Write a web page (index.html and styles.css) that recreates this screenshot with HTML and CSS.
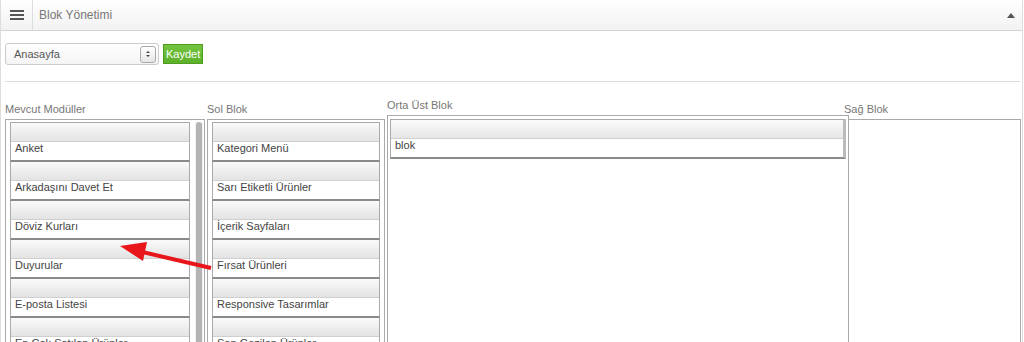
FILE: index.html
```html
<!DOCTYPE html>
<html lang="tr">
<head>
    <meta charset="UTF-8">
    <meta name="viewport" content="width=device-width, initial-scale=1.0">
    <title>Blok Yönetimi</title>
    <link rel="stylesheet" href="styles.css">
</head>
<body>
    <div class="panel">
        <div class="panel-head">
            <div class="menu-btn">
                <span></span><span></span><span></span>
            </div>
            <div class="panel-title">Blok Yönetimi</div>
            <div class="caret"></div>
        </div>

        <div class="toolbar">
            <div class="select">
                <span>Anasayfa</span>
                <div class="spinner">
                    <i class="up"></i><i class="down"></i>
                </div>
            </div>
            <button class="save">Kaydet</button>
        </div>

        <div class="rule"></div>

        <div class="columns">
            <div class="col col-mevcut">
                <div class="col-label">Mevcut Modüller</div>
                <div class="box">
                    <div class="list">
                        <div class="item"><div class="item-head"></div><div class="item-body">Anket</div></div>
                        <div class="item"><div class="item-head"></div><div class="item-body">Arkadaşını Davet Et</div></div>
                        <div class="item"><div class="item-head"></div><div class="item-body">Döviz Kurları</div></div>
                        <div class="item"><div class="item-head"></div><div class="item-body">Duyurular</div></div>
                        <div class="item"><div class="item-head"></div><div class="item-body">E-posta Listesi</div></div>
                        <div class="item"><div class="item-head"></div><div class="item-body">En Çok Satılan Ürünler</div></div>
                    </div>
                    <div class="scrollbar"><div class="thumb"></div></div>
                </div>
            </div>

            <div class="col col-sol">
                <div class="col-label">Sol Blok</div>
                <div class="box">
                    <div class="list">
                        <div class="item"><div class="item-head"></div><div class="item-body">Kategori Menü</div></div>
                        <div class="item"><div class="item-head"></div><div class="item-body">Sarı Etiketli Ürünler</div></div>
                        <div class="item"><div class="item-head"></div><div class="item-body">İçerik Sayfaları</div></div>
                        <div class="item"><div class="item-head"></div><div class="item-body">Fırsat Ürünleri</div></div>
                        <div class="item"><div class="item-head"></div><div class="item-body">Responsive Tasarımlar</div></div>
                        <div class="item"><div class="item-head"></div><div class="item-body">Son Gezilen Ürünler</div></div>
                    </div>
                </div>
            </div>

            <div class="col col-orta">
                <div class="col-label">Orta Üst Blok</div>
                <div class="box">
                    <div class="list">
                        <div class="item item-wide"><div class="item-head"></div><div class="item-body">blok</div></div>
                    </div>
                </div>
            </div>

            <div class="col col-sag">
                <div class="col-label">Sağ Blok</div>
                <div class="box"></div>
            </div>
        </div>
    </div>

    <svg class="arrow" width="1024" height="342" viewBox="0 0 1024 342">
        <line x1="211" y1="268" x2="138" y2="251" stroke="#e8161b" stroke-width="4"/>
        <polygon points="120,246 147,242 143,261" fill="#e8161b"/>
    </svg>
</body>
</html>
```

FILE: styles.css
```css
body {
    margin: 0;
    background: #fff;
    font-family: "Liberation Sans", Arial, sans-serif;
    font-size: 11px;
    color: #333;
    height: 342px;
    overflow: hidden;
    position: relative;
}
.panel {
    width: 1021px;
    border-left: 1px solid #ddd;
    border-right: 1px solid #ddd;
    min-height: 342px;
}
.panel-head {
    display: flex;
    align-items: center;
    height: 30px;
    border-bottom: 1px solid #d4d4d4;
    background: linear-gradient(#ffffff, #f2f2f2);
}
.menu-btn {
    width: 31px;
    height: 30px;
    border-right: 1px solid #ddd;
    display: flex;
    flex-direction: column;
    justify-content: center;
    align-items: center;
    gap: 2px;
}
.menu-btn span {
    display: block;
    width: 14px;
    height: 2px;
    background: #555;
}
.panel-title {
    flex: 1;
    padding-left: 6px;
    font-size: 12px;
    color: #777;
}
.caret {
    width: 0;
    height: 0;
    border-left: 4px solid transparent;
    border-right: 4px solid transparent;
    border-bottom: 5px solid #555;
    margin-right: 7px;
}
.toolbar {
    display: flex;
    align-items: center;
    gap: 4px;
    padding: 12px 0 0 4px;
    height: 22px;
}
.select {
    height: 20px;
    border: 1px solid #ccc;
    border-radius: 3px;
    background: linear-gradient(#ffffff, #f4f4f4);
    display: flex;
    align-items: center;
    justify-content: space-between;
    padding-left: 8px;
    box-sizing: content-box;
    width: 144px;
    color: #555;
}
.spinner {
    width: 14px;
    height: 15px;
    border: 1px solid #aaa;
    border-radius: 3px;
    background: linear-gradient(#fff, #e6e6e6);
    margin-right: 2px;
    display: flex;
    flex-direction: column;
    align-items: center;
    justify-content: center;
    gap: 2px;
}
.spinner i {
    display: block;
    width: 0;
    height: 0;
    border-left: 2px solid transparent;
    border-right: 2px solid transparent;
}
.spinner .up {
    border-bottom: 2px solid #444;
}
.spinner .down {
    border-top: 2px solid #444;
}
.save {
    height: 20px;
    padding: 0 2px;
    border: 1px solid #4f9e22;
    background: linear-gradient(#74c43f, #5cb02a);
    color: #fff;
    font-family: inherit;
    font-size: 11px;
    cursor: pointer;
}
.rule {
    margin: 16px 0 0 4px;
    height: 1px;
    background: #ddd;
    width: 1015px;
}
.columns {
    display: flex;
    align-items: flex-start;
    margin-top: 21px;
    padding-left: 4px;
}
.col-label {
    color: #777;
    font-size: 11px;
    height: 13px;
    margin-bottom: 3px;
}
.box {
    border: 1px solid #aaa;
    height: 260px;
    box-sizing: border-box;
    display: flex;
    align-items: flex-start;
    padding: 2px 4px;
}
.list {
    flex: 1;
}
.item {
    border: 1px solid #aaa;
    border-top: none;
    border-bottom: 2px solid #8a8a8a;
}
.item:first-child {
    border-top: 1px solid #aaa;
}
.item-head {
    height: 18px;
    background: linear-gradient(#fafafa, #e3e3e3);
    border-bottom: 1px solid #d0d0d0;
}
.item-body {
    height: 18px;
    background: #fff;
    padding: 0 4px;
    box-sizing: border-box;
    line-height: 12px;
    color: #444;
    white-space: nowrap;
    overflow: hidden;
}
.col-mevcut {
    width: 200px;
    margin-right: 2px;
}
.col-mevcut .box {
    padding-right: 1px;
}
.col-mevcut .list {
    margin-right: 5px;
}
.scrollbar {
    width: 8px;
    height: 240px;
    background: #f2f2f2;
}
.thumb {
    width: 6px;
    margin: 0 auto;
    height: 240px;
    border-radius: 3px;
    background: #b4b4b4;
}
.col-sol {
    width: 178px;
    margin-right: 2px;
}
.col-orta {
    width: 462px;
    margin-top: -4px;
    margin-right: -5px;
}
.col-orta .box {
    padding: 3px 2px;
}
.item-wide {
    border-right: 3px solid #bbb;
}
.item-wide .item-head {
    background: linear-gradient(#fbfbfb, #e6e6e6);
}
.col-sag {
    width: 177px;
}
.col-sag .box {
    margin-left: 4px;
    border-color: #aaa;
    height: 240px;
}
.arrow {
    position: absolute;
    left: 0;
    top: 0;
    pointer-events: none;
}
```
